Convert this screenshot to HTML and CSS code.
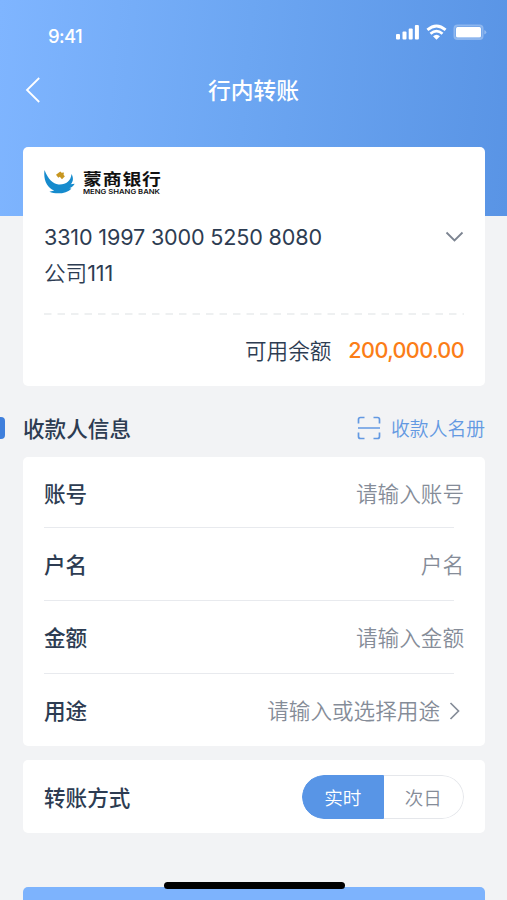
FILE: index.html
```html
<!DOCTYPE html>
<html lang="zh-CN">
<head>
<meta charset="utf-8">
<meta name="viewport" content="width=device-width, initial-scale=1">
<title>行内转账</title>
<link rel="stylesheet" href="styles.css">
</head>
<body>
<div class="screen">
  <header class="hero">
    <div class="status">
      <span class="time">9:41</span>
      <svg class="status-icons" width="92" height="20" viewBox="0 0 92 20">
        <g fill="#fff">
          <rect x="1" y="11" width="4" height="5.5" rx="1"/>
          <rect x="7.500" y="8.500" width="4" height="8" rx="1"/>
          <rect x="13.700" y="5.500" width="4" height="11" rx="1"/>
          <rect x="19.900" y="2" width="4" height="14.500" rx="1"/>
          <path d="M41.500 16.800 38 13.200Q41.500 10.200 45 13.200Z"/>
          <rect x="61" y="4" width="25" height="10.500" rx="1.500"/>
        </g>
        <g fill="none" stroke="#fff" stroke-width="2.800">
          <path d="M32.400 6.900Q41.500-.9 50.600 6.900"/>
          <path d="M35.500 10.800Q41.500 5.400 47.500 10.800"/>
        </g>
        <rect x="59.500" y="2.500" width="28" height="13.500" rx="3" fill="none" stroke="#fff" stroke-opacity=".3" stroke-width="2"/>
        <path d="M89.300 7v4.500q2-.7 2-2.250T89.300 7Z" fill="#fff" fill-opacity=".35"/>
      </svg>
    </div>
    <nav class="navbar">
      <svg class="back" width="16" height="26" viewBox="0 0 16 26"><path d="M14.200 1 2 13l12.200 12" fill="none" stroke="#fff" stroke-width="1.800"/></svg>
      <h1>行内转账</h1>
    </nav>
  </header>

  <main>
    <section class="card account">
      <div class="brand">
        <svg width="31" height="26" viewBox="0 0 31 26">
          <path d="M.5 2C4 11 9 16 14.500 16.500c7 .6 12.500-3.500 13-10.500 2.200 4 1.800 7.500-.8 10.300l4-.6c-1.200 2.300-3 3.600-5.300 4.500l2 .2c-4.500 5.300-15 6.300-22 3.300l4.800-1.200C3 20-.8 12 .5 2Z" fill="#168bcd"/>
          <path d="m12 6.800 4.300-3.200 1.300 1.200 2.300-.2-.3 2.400 1.300 1.300-2.900 2.900-2.200-2.400-1.500 1Z" fill="#c79620"/>
        </svg>
        <div class="brand-name">
          <span class="logo-cn">蒙商银行</span>
          <span class="logo-en">MENG SHANG BANK</span>
        </div>
      </div>
      <div class="account-row">
        <span class="number">3310 1997 3000 5250 8080</span>
        <svg width="19" height="12" viewBox="0 0 19 12"><path d="m1.500 1.500 8 8 8-8" fill="none" stroke="#7c8491" stroke-width="1.800"/></svg>
      </div>
      <div class="company">公司<span>111</span></div>
      <svg class="dash" width="420" height="2" viewBox="0 0 420 2"><path d="M0 1h420" stroke="#e9ebed" stroke-width="1.500" stroke-dasharray="7.500 6"/></svg>
      <div class="balance"><span>可用余额</span><strong>200,000.00</strong></div>
    </section>

    <div class="section-head">
      <h2>收款人信息</h2>
      <a class="roster">
        <svg width="24" height="24" viewBox="0 0 24 24"><path d="M1.500 7.500V3.500q0-2 2-2h4M16.500 1.500h4q2 0 2 2v4M22.500 16.500v4q0 2-2 2h-4M7.500 22.500h-4q-2 0-2-2v-4M1 12h22" fill="none" stroke="#6399e2" stroke-width="1.700"/></svg>
        <span>收款人名册</span>
      </a>
    </div>

    <section class="card form">
      <div class="row"><label>账号</label><span class="hint">请输入账号</span></div>
      <div class="row"><label>户名</label><span class="hint">户名</span></div>
      <div class="row"><label>金额</label><span class="hint">请输入金额</span></div>
      <div class="row"><label>用途</label><span class="hint">请输入或选择用途</span>
        <svg class="more" width="12" height="18" viewBox="0 0 12 18"><path d="m1.500 1 8 8-8 8" fill="none" stroke="#858c98" stroke-width="1.700"/></svg>
      </div>
    </section>

    <section class="card method">
      <label>转账方式</label>
      <div class="toggle"><span class="on">实时</span><span class="off">次日</span></div>
    </section>

    <div class="submit"></div>
  </main>
  <div class="home-bar"></div>
</div>
</body>
</html>
```

FILE: styles.css
```css
* { box-sizing: border-box; }
body {
  margin: 0;
  background: #f2f3f5;
  color: #2d3c52;
  font-family: "Noto Sans CJK SC", sans-serif;
  font-size: 21.6px;
  font-weight: 350;
  line-height: 32px;
}
h1, h2 { margin: 0; font-weight: 500; }
svg { display: block; flex: none; }
.screen { position: relative; height: 900px; overflow: hidden; }
.hero {
  height: 216px;
  background: linear-gradient(95deg, #7fb5ff 0%, #6ca6f2 48%, #5994e5 100%);
  color: #fff;
}
.status {
  display: flex;
  justify-content: space-between;
  height: 60px;
  padding: 20px 20px 0 48px;
}
.time {
  font-family: Inter, sans-serif;
  font-size: 18.5px;
  font-weight: 500;
  letter-spacing: -.6px;
}
.status-icons { margin-top: 3px; }
.navbar {
  display: grid;
  grid-template-columns: 26px 1fr 26px;
  align-items: center;
  height: 60px;
  padding: 0 25px;
}
h1 {
  text-align: center;
  font-size: 22.8px;
}
main { padding: 0 22px 0 23px; margin-top: -69px; }
.card { background: #fff; border-radius: 5px; }
.account { height: 239px; padding: 21px 21px 0; }
.brand { display: flex; gap: 8px; height: 30px; }
.brand-name {
  display: flex;
  flex-direction: column;
  color: #111;
  white-space: nowrap;
}
.logo-cn {
  font-size: 16.3px;
  font-weight: 700;
  line-height: 20px;
  letter-spacing: .7px;
  transform: scaleX(1.16);
  transform-origin: left;
}
.logo-en {
  font: 600 6.8px/7px Inter, sans-serif;
  transform: scaleX(1.13);
  transform-origin: left;
}
.account-row {
  display: flex;
  justify-content: space-between;
  align-items: center;
  height: 32px;
  margin-top: 23px;
}
.number, .company span {
  font-family: Inter, sans-serif;
  font-size: 21.6px;
  font-weight: 400;
  letter-spacing: -.17px;
}
.company { margin-top: 3px; }
.dash { margin-top: 24px; }
.balance {
  display: flex;
  justify-content: flex-end;
  gap: 17px;
  margin-top: 19px;
}
.balance strong {
  color: #fb7d17;
  font-family: Inter, sans-serif;
  font-weight: 500;
  letter-spacing: -.6px;
}
.section-head {
  display: flex;
  justify-content: space-between;
  align-items: center;
  height: 71px;
  margin-left: -23px;
  padding-top: 12px;
}
h2 {
  display: flex;
  align-items: center;
  gap: 18px;
  font-size: 21.6px;
}
h2::before {
  content: "";
  width: 5px;
  height: 22px;
  border-radius: 0 4px 4px 0;
  background: #3f7fdc;
}
.roster {
  display: flex;
  align-items: center;
  gap: 10px;
  color: #6399e2;
  font-size: 18.8px;
}
.form { height: 289px; padding: 0 21px; }
.row {
  display: flex;
  align-items: center;
  height: 73px;
  background: linear-gradient(#e8eaee, #e8eaee) left bottom / 410px 1.5px no-repeat;
}
.row:first-child { height: 71px; padding-top: 2px; }
.row:last-child { background: none; }
label { font-weight: 500; }
.row label, .row .hint { margin-top: -1px; }
.hint {
  margin-left: auto;
  color: #858c98;
}
.more { margin: 0 3px 0 9px; }
.method {
  display: flex;
  justify-content: space-between;
  align-items: center;
  height: 73px;
  margin-top: 14px;
  padding: 0 21px;
}
.toggle {
  display: flex;
  width: 162px;
  height: 44px;
  border-radius: 22px;
  overflow: hidden;
  font-size: 18.6px;
  line-height: 42px;
  text-align: center;
}
.toggle span { flex: 1; border: 1px solid #e5e7eb; }
.toggle .on { border-color: #5895e6; border-radius: 22px 0 0 22px; background: #5895e6; color: #fff; }
.toggle .off { border-left: 0; border-radius: 0 22px 22px 0; color: #858c98; }
.submit {
  height: 50px;
  margin-top: 54px;
  border-radius: 5px;
  background: #7db3fd;
}
.home-bar {
  position: absolute;
  left: 164px;
  top: 882px;
  width: 181px;
  height: 7px;
  border-radius: 4px;
  background: #000;
}
```
